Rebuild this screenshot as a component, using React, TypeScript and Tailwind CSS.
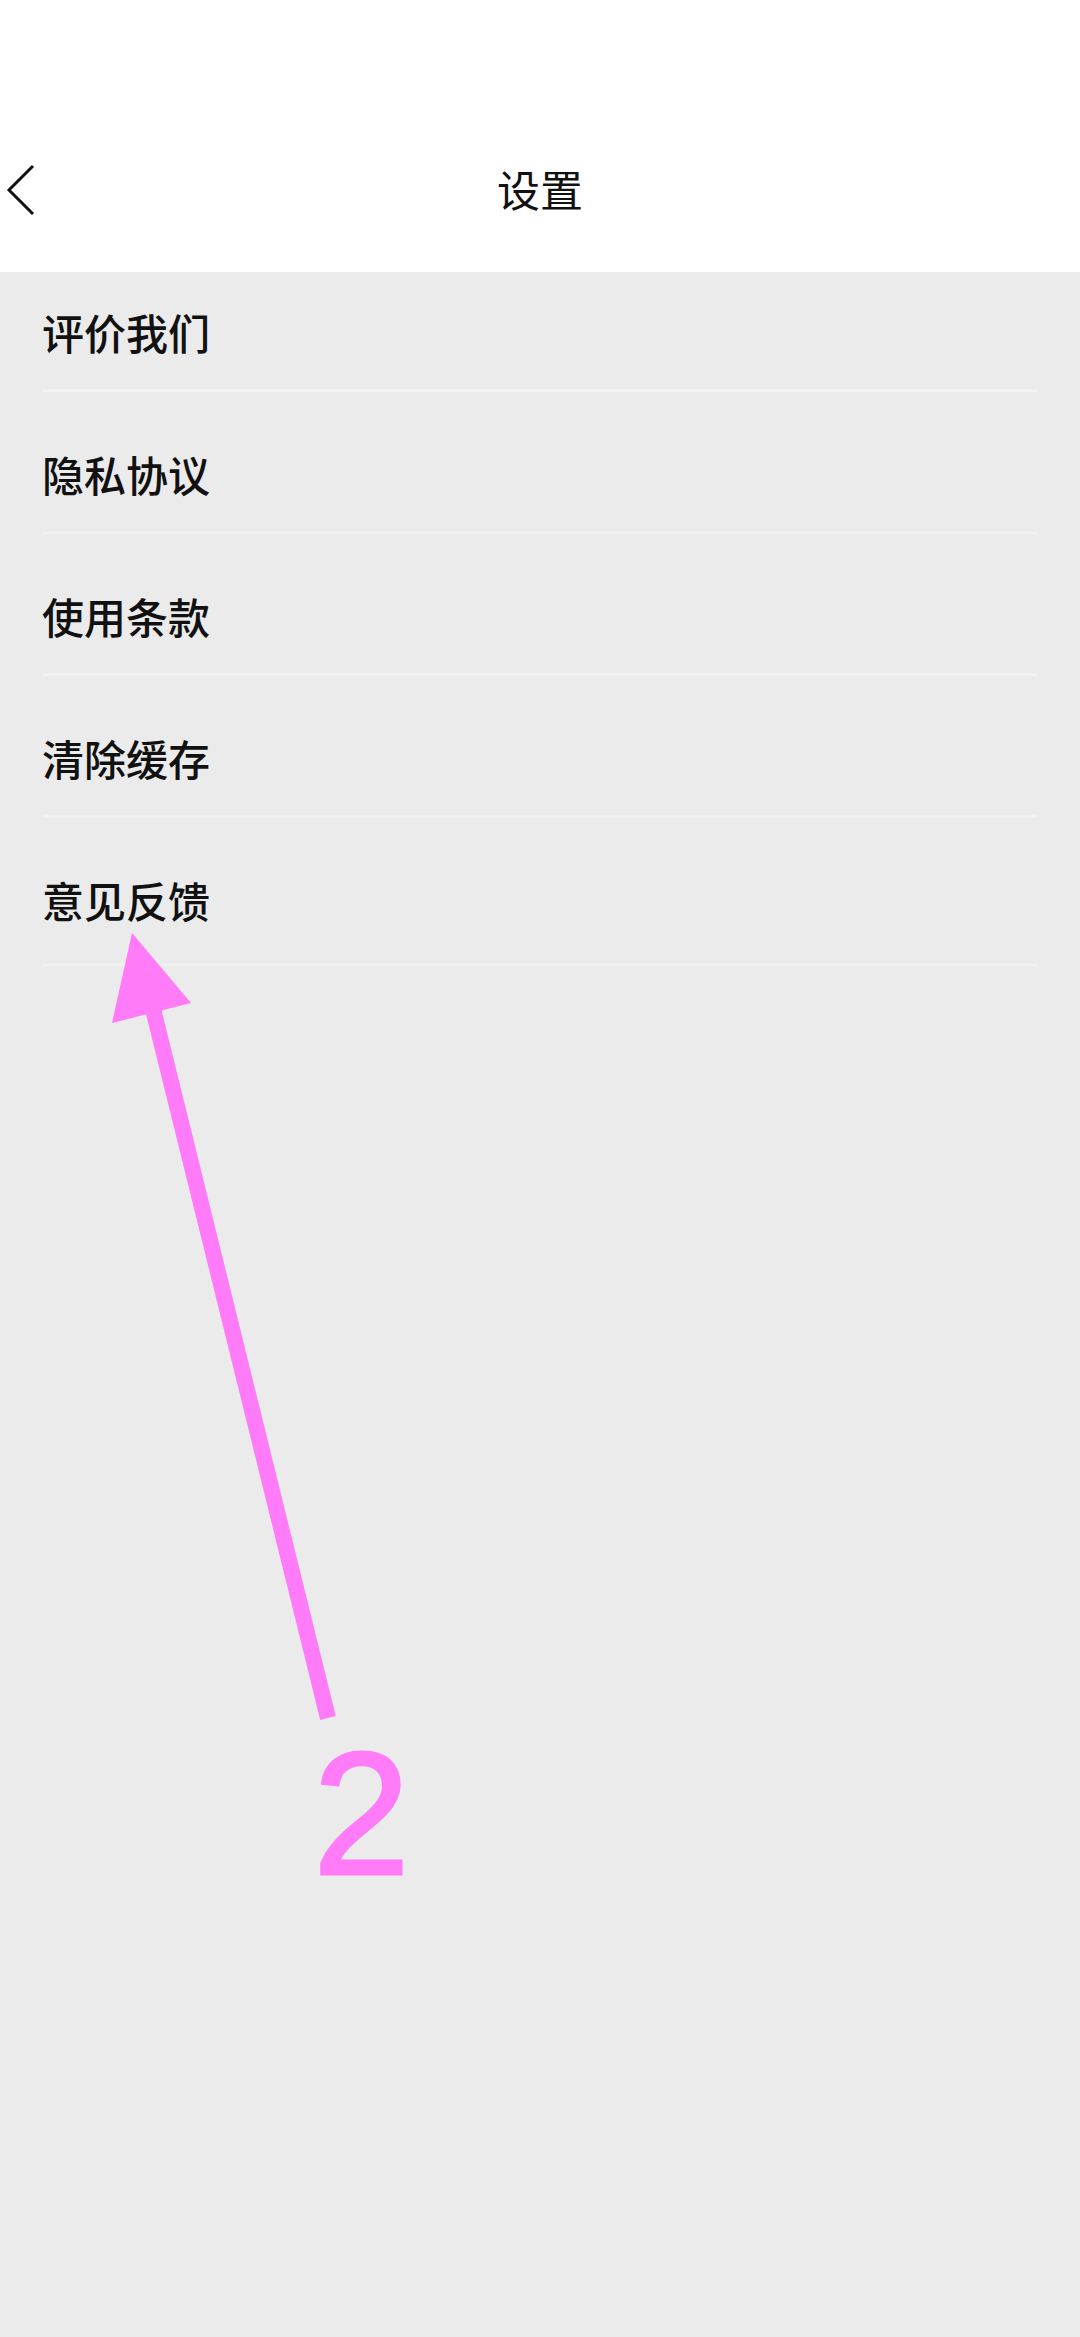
import React from 'react';

const items = ['评价我们', '隐私协议', '使用条款', '清除缓存', '意见反馈'];

const font = { fontFamily: '"Noto Sans CJK SC", "Noto Sans", sans-serif' };

export default function App() {
    return (
        <div className="relative w-[1080px] h-[2337px] bg-[#ebebeb] overflow-hidden" style={font}>
            <div className="h-[272px] bg-white flex items-end pb-[58px] relative">
                <svg className="absolute left-[6px] top-[164px]" width="30" height="52" viewBox="0 0 30 52">
                    <path d="M27 2 L3 26 L27 50" fill="none" stroke="#111" strokeWidth="3" />
                </svg>
                <div className="w-full text-center text-[43px] leading-[52px] text-[#111]">设置</div>
            </div>
            <div className="flex flex-col">
                {items.map((t, i) => (
                    <div key={t} className={`mx-[43px] border-b-[3px] border-[#f1f1f1] ${i === 0 ? 'pt-[39px]' : 'pt-[61px]'} ${i === items.length - 1 ? 'pb-[42px]' : 'pb-[36px]'}`}>
                        <div className="text-[42px] leading-[42px] font-medium text-[#111] -ml-[1px]">{t}</div>
                    </div>
                ))}
            </div>
            {/* annotation overlay */}
            <svg className="absolute left-0 top-0 pointer-events-none" width="1080" height="2337" viewBox="0 0 1080 2337">
                <line x1="152" y1="1005" x2="328" y2="1718" stroke="#ff7bf7" strokeWidth="16" />
                <polygon points="132,933 112,1023 191,1003" fill="#ff7bf7" />
            </svg>
            <div className="absolute left-[313px] top-[1727px] text-[174px] leading-none text-[#ff7bf7] [-webkit-text-stroke:3px_#ff7bf7]" style={{ fontFamily: '"Liberation Sans", Arial, sans-serif' }}>2</div>
        </div>
    );
}
